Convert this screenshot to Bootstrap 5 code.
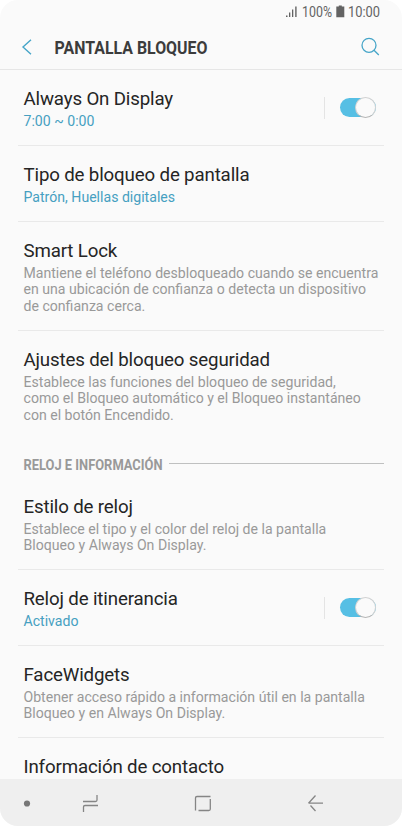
<!DOCTYPE html>
<html lang="es">
<head>
<meta charset="utf-8">
<meta name="viewport" content="width=device-width, initial-scale=1">
<title>Pantalla bloqueo</title>
<link href="https://cdn.jsdelivr.net/npm/bootstrap@5.3.0/dist/css/bootstrap.min.css" rel="stylesheet">
<style>
body{background:#fff;font-family:Roboto,sans-serif;color:#252525}
.phone{width:402px;height:826px;background:#fafafa;border-radius:18px}
.status{height:24px;padding-right:19px}
.appbar{height:46px;border-bottom:1px solid #e6e6e6;padding:0 22px 0 21px}
.settings{height:709px;padding:0 18px}
.setting{border-bottom:1px solid #e9e9e9;padding:17px 5px 0 5.5px}
.h-two{height:76px}.h-three{height:109px}.h-desc{height:92px}
.setting h2{font-size:18.7px;line-height:24px;font-weight:400;letter-spacing:-.15px;margin:0;white-space:nowrap}
.setting p{font-size:14.1px;line-height:16.4px;color:#999;margin:2px 0 0;white-space:nowrap}
.setting p.value{color:#46a0c1}
.section{height:38px;padding:9px 0 0 5px}
.section hr{border-color:#bfc0c0;opacity:1;margin:0 0 0 5px}
.split{height:22px;width:1px;background:#e4e4e4;margin:10px 15px 0 0}
.switch-track{width:36px;height:19px;border-radius:10px;background:#56bfe4;margin:11px 3px 0 0}
.switch-thumb{width:21px;height:21px;border-radius:50%;background:#fafafa;border:1px solid #d2d2d2;border-bottom-color:#b5b5b5}
.softkeys{height:47px;background:#efefef}
svg{display:block;flex:none;overflow:visible}
svg text{font-family:Roboto,sans-serif}
</style>
</head>
<body>
<main class="phone overflow-hidden d-flex flex-column">
  <div class="status d-flex justify-content-end align-items-end flex-shrink-0">
    <svg width="98" height="24" fill="#636363">
      <path d="M1 15.5h1.500v1.500H1zM4 12.500h1.300V17H4zM7 9.500h1.300V17H7zM10.200 6.500h1.400V17h-1.400z"/>
      <text x="17" y="17.200" font-size="14.600" textLength="30" lengthAdjust="spacingAndGlyphs">100%</text>
      <path d="M53 5.500h3V6.500h2.500V17.200h-8V6.500H53z" transform="translate(.8 0)"/>
      <text x="63" y="17.200" font-size="14.600" textLength="32" lengthAdjust="spacingAndGlyphs">10:00</text>
    </svg>
  </div>
  <header class="appbar d-flex align-items-center flex-shrink-0">
    <svg width="12" height="46" fill="none" stroke="#46a5c8" stroke-width="1.400"><path d="M10 15.700 2 23l8 7.300"/></svg>
    <svg width="180" height="46"><text x="21.500" y="29.700" font-size="18.300" font-weight="700" fill="#3c3c3c" textLength="153" lengthAdjust="spacingAndGlyphs">PANTALLA BLOQUEO</text></svg>
    <svg class="ms-auto" width="20" height="46" fill="none" stroke="#46a5c8" stroke-width="1.300"><circle cx="9" cy="21.300" r="7"/><path d="m14 26.300 4.800 4.700"/></svg>
  </header>
  <div class="settings overflow-hidden">
    <div class="setting h-two d-flex justify-content-between">
      <div><h2>Always On Display</h2><p class="value">7:00 ~ 0:00</p></div>
      <div class="d-flex"><span class="split"></span><div class="switch-track d-flex justify-content-end align-items-center"><span class="switch-thumb flex-shrink-0"></span></div></div>
    </div>
    <div class="setting h-two"><h2>Tipo de bloqueo de pantalla</h2><p class="value">Patrón, Huellas digitales</p></div>
    <div class="setting h-three"><h2>Smart Lock</h2><p>Mantiene el teléfono desbloqueado cuando se encuentra<br>en una ubicación de confianza o detecta un dispositivo<br>de confianza cerca.</p></div>
    <div class="setting h-three border-0"><h2>Ajustes del bloqueo seguridad</h2><p>Establece las funciones del bloqueo de seguridad,<br>como el Bloqueo automático y el Bloqueo instantáneo<br>con el botón Encendido.</p></div>
    <div class="section d-flex align-items-center">
      <svg width="141" height="28"><text x="0.500" y="19.500" font-size="14" font-weight="700" fill="#999" textLength="139" lengthAdjust="spacingAndGlyphs">RELOJ E INFORMACIÓN</text></svg>
      <hr class="flex-grow-1">
    </div>
    <div class="setting h-desc"><h2>Estilo de reloj</h2><p>Establece el tipo y el color del reloj de la pantalla<br>Bloqueo y Always On Display.</p></div>
    <div class="setting h-two d-flex justify-content-between">
      <div><h2>Reloj de itinerancia</h2><p class="value">Activado</p></div>
      <div class="d-flex"><span class="split"></span><div class="switch-track d-flex justify-content-end align-items-center"><span class="switch-thumb flex-shrink-0"></span></div></div>
    </div>
    <div class="setting h-desc"><h2>FaceWidgets</h2><p>Obtener acceso rápido a información útil en la pantalla<br>Bloqueo y en Always On Display.</p></div>
    <div class="setting border-0"><h2>Información de contacto</h2></div>
  </div>
  <nav class="softkeys flex-shrink-0">
    <svg width="402" height="47" fill="none" stroke="#858585" stroke-width="1.300">
      <circle cx="27" cy="24.500" r="3.100" fill="#777" stroke="none"/>
      <path d="M83 22.500h12.500q1.500 0 1.500-1.500v-5M98 26.500H85q-1.500 0-1.500 1.500v5"/>
      <path d="M210.500 17.500H197q-1.500 0-1.500 1.500v12.500M210.300 20v10q0 1.500-1.500 1.500h-10.300"/>
      <path d="M315.500 16.500 308.500 24.200M323 24.200h-14.500M310.500 26.500l5 5.500"/>
    </svg>
  </nav>
</main>
<script src="https://cdn.jsdelivr.net/npm/bootstrap@5.3.0/dist/js/bootstrap.bundle.min.js"></script>
</body>
</html>
